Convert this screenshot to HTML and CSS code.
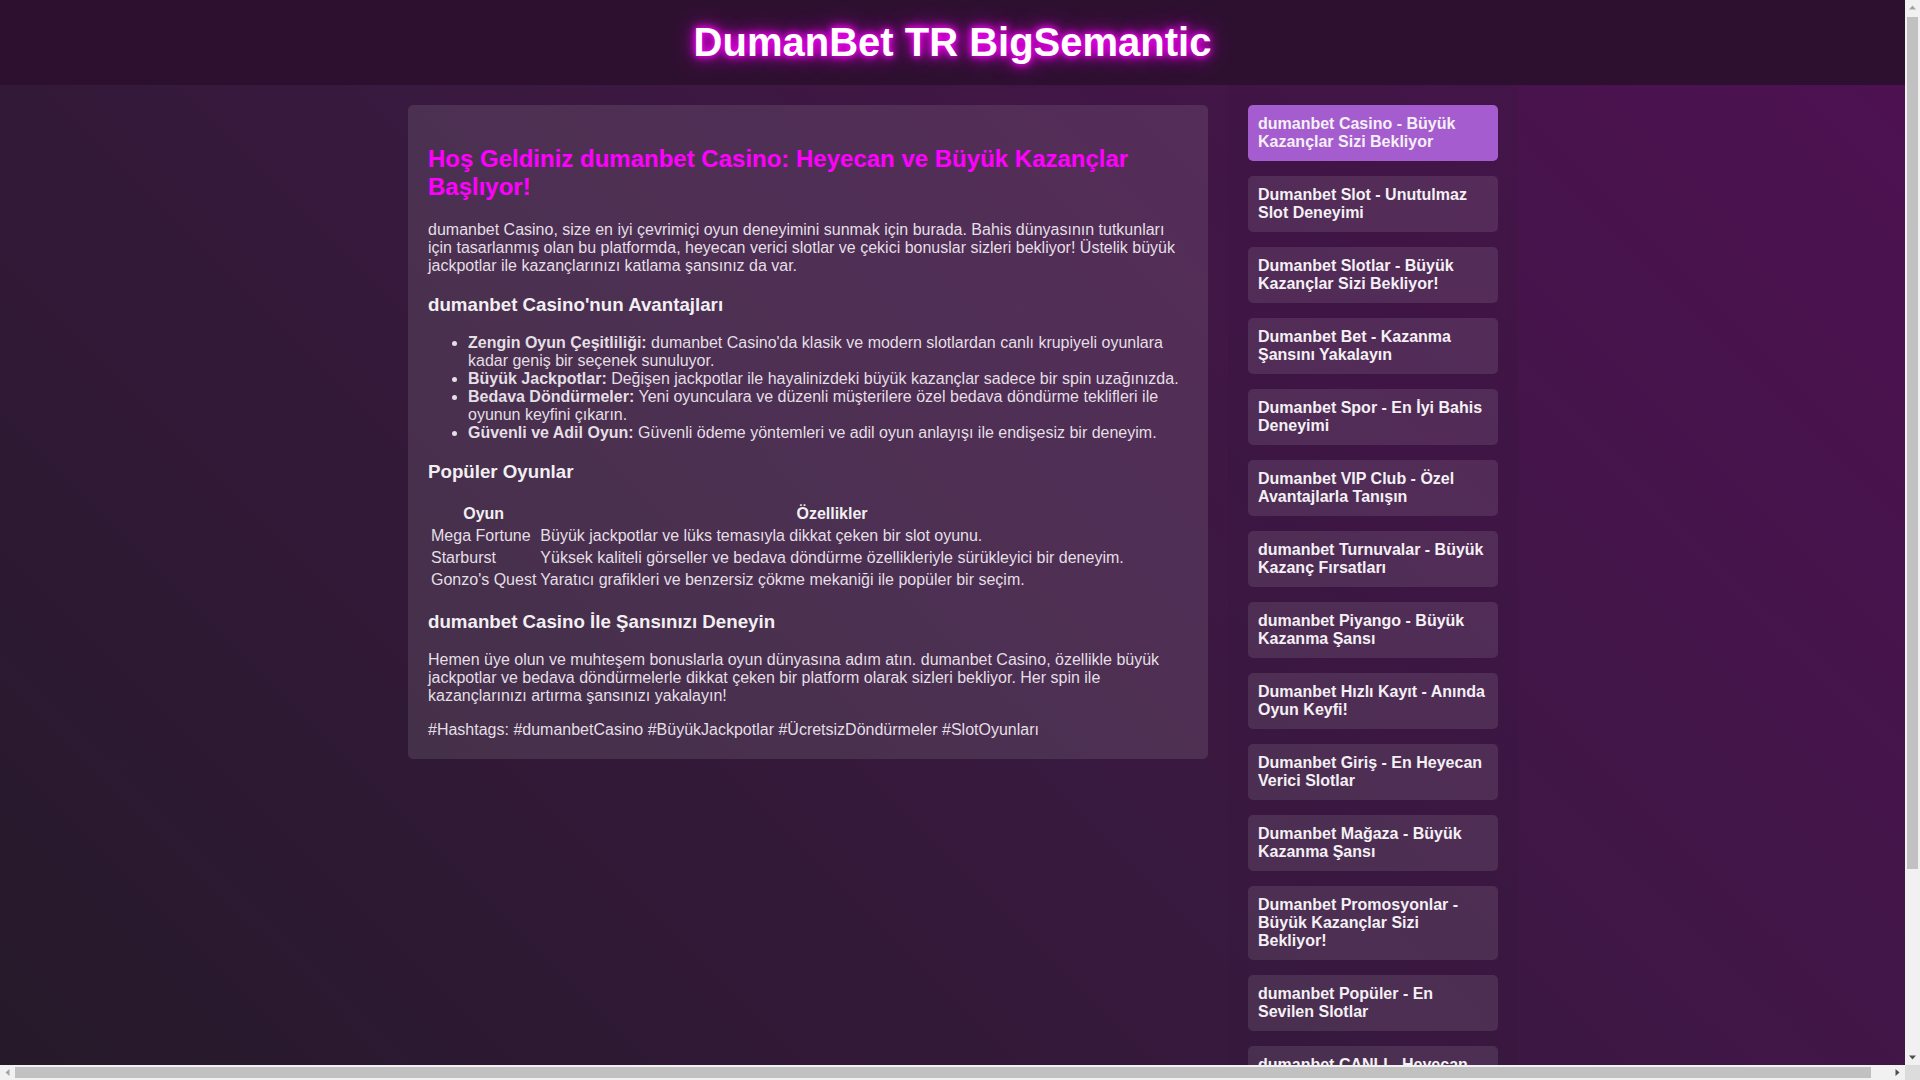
FILE: index.html
```html
<!DOCTYPE html>
<html lang="tr">
<head>
<meta charset="utf-8">
<title>DumanBet TR BigSemantic</title>
<link rel="stylesheet" href="styles.css">
</head>
<body>
<header class="site-header">
  <h1 class="site-title">DumanBet TR BigSemantic</h1>
</header>
<div class="layout">
  <main class="content">
    <article class="card">
      <h2 class="card-title">Hoş Geldiniz dumanbet Casino: Heyecan ve Büyük Kazançlar Başlıyor!</h2>
      <p>dumanbet Casino, size en iyi çevrimiçi oyun deneyimini sunmak için burada. Bahis dünyasının tutkunları için tasarlanmış olan bu platformda, heyecan verici slotlar ve çekici bonuslar sizleri bekliyor! Üstelik büyük jackpotlar ile kazançlarınızı katlama şansınız da var.</p>
      <h3>dumanbet Casino'nun Avantajları</h3>
      <ul>
        <li><strong>Zengin Oyun Çeşitliliği:</strong> dumanbet Casino'da klasik ve modern slotlardan canlı krupiyeli oyunlara kadar geniş bir seçenek sunuluyor.</li>
        <li><strong>Büyük Jackpotlar:</strong> Değişen jackpotlar ile hayalinizdeki büyük kazançlar sadece bir spin uzağınızda.</li>
        <li><strong>Bedava Döndürmeler:</strong> Yeni oyunculara ve düzenli müşterilere özel bedava döndürme teklifleri ile oyunun keyfini çıkarın.</li>
        <li><strong>Güvenli ve Adil Oyun:</strong> Güvenli ödeme yöntemleri ve adil oyun anlayışı ile endişesiz bir deneyim.</li>
      </ul>
      <h3>Popüler Oyunlar</h3>
      <table class="games">
        <thead>
          <tr><th>Oyun</th><th>Özellikler</th></tr>
        </thead>
        <tbody>
          <tr><td>Mega Fortune</td><td>Büyük jackpotlar ve lüks temasıyla dikkat çeken bir slot oyunu.</td></tr>
          <tr><td>Starburst</td><td>Yüksek kaliteli görseller ve bedava döndürme özellikleriyle sürükleyici bir deneyim.</td></tr>
          <tr><td>Gonzo's Quest</td><td>Yaratıcı grafikleri ve benzersiz çökme mekaniği ile popüler bir seçim.</td></tr>
        </tbody>
      </table>
      <h3>dumanbet Casino İle Şansınızı Deneyin</h3>
      <p>Hemen üye olun ve muhteşem bonuslarla oyun dünyasına adım atın. dumanbet Casino, özellikle büyük jackpotlar ve bedava döndürmelerle dikkat çeken bir platform olarak sizleri bekliyor. Her spin ile kazançlarınızı artırma şansınızı yakalayın!</p>
      <div class="hashtags">#Hashtags: #dumanbetCasino #BüyükJackpotlar #ÜcretsizDöndürmeler #SlotOyunları</div>
    </article>
  </main>
  <aside class="sidebar">
    <a class="side-link active" href="#">dumanbet Casino - Büyük Kazançlar Sizi Bekliyor</a>
    <a class="side-link" href="#">Dumanbet Slot - Unutulmaz Slot Deneyimi</a>
    <a class="side-link" href="#">Dumanbet Slotlar - Büyük Kazançlar Sizi Bekliyor!</a>
    <a class="side-link" href="#">Dumanbet Bet - Kazanma Şansını Yakalayın</a>
    <a class="side-link" href="#">Dumanbet Spor - En İyi Bahis Deneyimi</a>
    <a class="side-link" href="#">Dumanbet VIP Club - Özel Avantajlarla Tanışın</a>
    <a class="side-link" href="#">dumanbet Turnuvalar - Büyük Kazanç Fırsatları</a>
    <a class="side-link" href="#">dumanbet Piyango - Büyük Kazanma Şansı</a>
    <a class="side-link" href="#">Dumanbet Hızlı Kayıt - Anında Oyun Keyfi!</a>
    <a class="side-link" href="#">Dumanbet Giriş - En Heyecan Verici Slotlar</a>
    <a class="side-link" href="#">Dumanbet Mağaza - Büyük Kazanma Şansı</a>
    <a class="side-link" href="#">Dumanbet Promosyonlar - Büyük Kazançlar Sizi Bekliyor!</a>
    <a class="side-link" href="#">dumanbet Popüler - En Sevilen Slotlar</a>
    <a class="side-link" href="#">dumanbet CANLI - Heyecan Dolu Canlı Oyunlar</a>
    <a class="side-link" href="#">Dumanbet Bonus - Kazancınızı Katlayın</a>
  </aside>
</div>

<div class="fake-vscroll" aria-hidden="true">
  <svg class="arrow" viewBox="0 0 15 15" width="15" height="15"><path d="M4 9.5 L7.5 5.5 L11 9.5 Z" fill="#a3a3a3"/></svg>
  <div class="vtrack"><div class="vthumb"></div></div>
  <svg class="arrow" viewBox="0 0 15 15" width="15" height="15"><path d="M4 5.5 L7.5 9.5 L11 5.5 Z" fill="#505050"/></svg>
</div>
<div class="fake-hscroll" aria-hidden="true">
  <svg class="arrow" viewBox="0 0 15 15" width="15" height="15"><path d="M9.5 4 L5.5 7.5 L9.5 11 Z" fill="#a3a3a3"/></svg>
  <div class="htrack"><div class="hthumb"></div></div>
  <svg class="arrow" viewBox="0 0 15 15" width="15" height="15"><path d="M5.5 4 L9.5 7.5 L5.5 11 Z" fill="#505050"/></svg>
  <div class="corner"></div>
</div>
</body>
</html>
```

FILE: styles.css
```css
html {
  background: #2a1630;
}

body {
  margin: 0;
  padding-right: 15px;
  overflow-x: hidden;
  font-family: "Liberation Sans", Arial, sans-serif;
  font-size: 16px;
  color: #e4dfe5;
  background: linear-gradient(45deg, #221a27 0%, #3b1842 50%, #4f1153 100%);
}

.site-header {
  background: #2d1030;
  padding: 20px 0;
  text-align: center;
}

.site-title {
  margin: 0;
  font-size: 40px;
  font-weight: bold;
  color: #ffffff;
  text-shadow: 0 0 6px #ff00ff, 0 0 12px #ff00ff, 0 0 22px #c000c0;
}

.layout {
  display: flex;
  align-items: stretch;
}

.content {
  width: 1228px;
  box-sizing: border-box;
  padding: 20px;
  display: flex;
  justify-content: flex-end;
  align-items: flex-start;
  background: rgba(50, 35, 50, 0.12);
}

.card {
  width: 800px;
  box-sizing: border-box;
  padding: 20px;
  border-radius: 5px;
  background: rgba(255, 255, 255, 0.1);
}

.card-title {
  font-size: 24px;
  color: #ff00ff;
  margin: 20px 0;
}

.card h3 {
  color: #f2eff2;
}

.card ul {
  padding-left: 40px;
}

.games th {
  font-weight: bold;
  color: #f2eff2;
}

.games td {
  text-align: left;
}

.hashtags {
  margin: 0;
}

.sidebar {
  width: 290px;
  box-sizing: border-box;
  padding: 20px;
  display: flex;
  flex-direction: column;
  gap: 15px;
  background: rgba(40, 25, 45, 0.15);
}

.side-link {
  display: block;
  padding: 10px;
  border-radius: 5px;
  background: rgba(255, 255, 255, 0.1);
  color: #f4f0f4;
  font-weight: bold;
  text-decoration: none;
}

.side-link.active {
  background: #a55ccf;
}

/* classic scrollbars drawn over the page edge */
.fake-vscroll {
  position: fixed;
  top: 0;
  right: 0;
  width: 15px;
  height: calc(100% - 15px);
  background: #f1f1f1;
  display: flex;
  flex-direction: column;
}

.fake-hscroll {
  position: fixed;
  left: 0;
  bottom: 0;
  width: 100%;
  height: 15px;
  background: #f1f1f1;
  display: flex;
}

.arrow {
  flex: none;
  display: block;
}

.vtrack {
  flex: 1;
  padding: 2px;
}

.vthumb {
  height: 852px;
  background: #c1c1c1;
}

.htrack {
  flex: 1;
  padding: 2px 0;
}

.hthumb {
  width: 1856px;
  height: 100%;
  background: #c1c1c1;
}

.corner {
  flex: none;
  width: 15px;
  background: #dcdcdc;
}
```
